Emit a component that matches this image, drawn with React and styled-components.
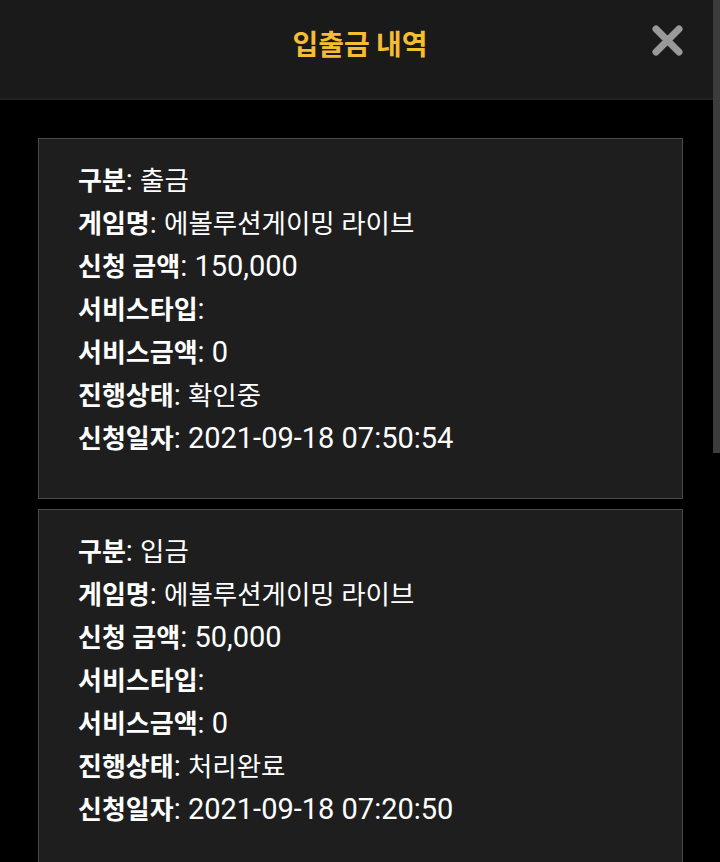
import styled, { createGlobalStyle } from "styled-components";

const GlobalStyle = createGlobalStyle`
  html, body {
    margin: 0;
    padding: 0;
    background: #000;
    overflow: hidden;
  }
  body {
    font-family: Roboto, "Noto Sans CJK KR", sans-serif;
  }
`;

const Page = styled.div`
  position: relative;
  width: 720px;
  height: 862px;
  overflow: hidden;
  background: #000;
`;

const Header = styled.header`
  height: 98px;
  background: #1a1a1a;
  border-bottom: 2px solid #222;
  display: flex;
  align-items: flex-start;
  justify-content: center;
  position: relative;
`;

const Title = styled.h1`
  margin: 0;
  padding-top: 23px;
  font-family: "Noto Sans CJK KR", sans-serif;
  font-size: 28px;
  font-weight: 700;
  line-height: 40px;
  color: #f4bd34;
`;

const CloseButton = styled.button`
  position: absolute;
  top: 24px;
  right: 36px;
  width: 33px;
  height: 33px;
  padding: 0;
  border: 0;
  background: none;
  cursor: pointer;
`;

const Scrollbar = styled.div`
  position: absolute;
  top: 0;
  right: 0;
  width: 7px;
  height: 453px;
  background: #3c3c3c;
`;

const List = styled.main`
  padding: 38px 37px 0 38px;
  display: flex;
  flex-direction: column;
  gap: 10px;
`;

const Card = styled.div`
  background: #1e1e1e;
  border: 1px solid #4a4a4a;
  padding: 20px 40px 38px 39px;
`;

const Row = styled.div`
  height: 43px;
  font-size: 29px;
  line-height: 43px;
  color: #fff;
  white-space: nowrap;
`;

const Label = styled.span`
  font-size: 26px;
  font-weight: 700;
  line-height: 1;
`;

const Value = styled.span`
  font-size: ${({ $latin }) => ($latin ? "29px" : "26.5px")};
  line-height: 1;
`;

const records = [
  {
    type: "출금",
    game: "에볼루션게이밍 라이브",
    amount: "150,000",
    serviceType: "",
    serviceAmount: "0",
    status: "확인중",
    date: "2021-09-18 07:50:54",
  },
  {
    type: "입금",
    game: "에볼루션게이밍 라이브",
    amount: "50,000",
    serviceType: "",
    serviceAmount: "0",
    status: "처리완료",
    date: "2021-09-18 07:20:50",
  },
];

const fields = [
  ["구분", "type"],
  ["게임명", "game"],
  ["신청 금액", "amount"],
  ["서비스타입", "serviceType"],
  ["서비스금액", "serviceAmount"],
  ["진행상태", "status"],
  ["신청일자", "date"],
];

const isLatin = (text) => /^[\x00-\x7f]*$/.test(text);

const CloseIcon = () => (
  <svg width="33" height="33" viewBox="0 0 33 33">
    <path
      d="M5 5 L28 28 M28 5 L5 28"
      stroke="#999"
      strokeWidth="7"
      strokeLinecap="round"
    />
  </svg>
);

const App = () => (
  <Page>
    <GlobalStyle />
    <Header>
      <Title>입출금 내역</Title>
      <CloseButton aria-label="닫기">
        <CloseIcon />
      </CloseButton>
    </Header>
    <List>
      {records.map((record) => (
        <Card key={record.date}>
          {fields.map(([label, key]) => (
            <Row key={key}>
              <Label>{label}</Label>:{" "}
              <Value $latin={isLatin(record[key])}>{record[key]}</Value>
            </Row>
          ))}
        </Card>
      ))}
    </List>
    <Scrollbar />
  </Page>
);

export default App;
